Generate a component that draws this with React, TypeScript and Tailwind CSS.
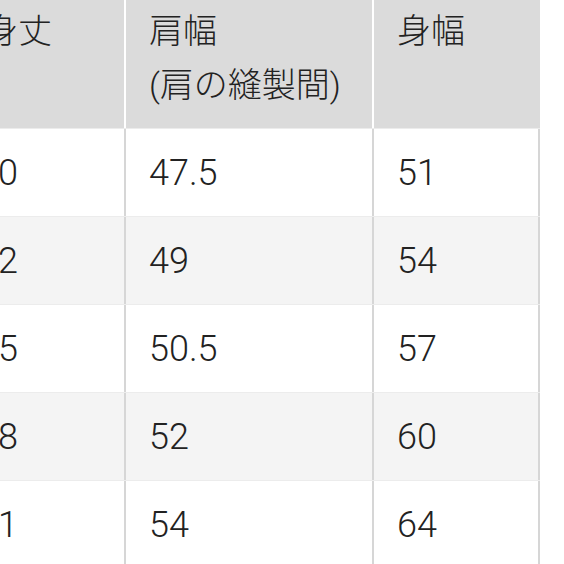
import React from "react";

const rows = [
  ["70", "47.5", "51"],
  ["72", "49", "54"],
  ["75", "50.5", "57"],
  ["78", "52", "60"],
  ["81", "54", "64"],
];

export default function App() {
  return (
    <div
      className="w-[564px] h-[564px] overflow-hidden bg-white text-[#222]"
      style={{ fontFamily: 'Roboto, "Noto Sans CJK JP", sans-serif' }}
    >
      <div className="ml-[-42px] w-[582px] flex flex-col">
        <div className="flex h-[128px] font-light">
          <div className="w-[166px] bg-[#dbdbdb] pl-[26px] pt-[4px] text-[34px] leading-[54px]">身丈</div>
          <div className="w-[248px] bg-[#dbdbdb] border-l-2 border-white pl-[23px] pt-[4px] text-[34px] leading-[54px]">
            <div>肩幅</div>
            <div>(肩の縫製間)</div>
          </div>
          <div className="w-[168px] bg-[#dbdbdb] border-l-2 border-white pl-[23px] pt-[4px] text-[34px] leading-[54px]">身幅</div>
        </div>
        {rows.map((r, i) => (
          <div
            key={i}
            className={`flex h-[88px] border-t border-[#ececec] ${i % 2 === 1 ? "bg-[#f4f4f4]" : "bg-white"}`}
          >
            <div className="w-[166px] pl-[20px] flex items-center text-[36px] font-light">{r[0]}</div>
            <div className="w-[248px] border-l-2 border-[#d6d6d6] pl-[23px] flex items-center text-[36px] font-light">{r[1]}</div>
            <div className="w-[168px] border-x-2 border-[#d6d6d6] pl-[23px] flex items-center text-[36px] font-light">{r[2]}</div>
          </div>
        ))}
      </div>
    </div>
  );
}
